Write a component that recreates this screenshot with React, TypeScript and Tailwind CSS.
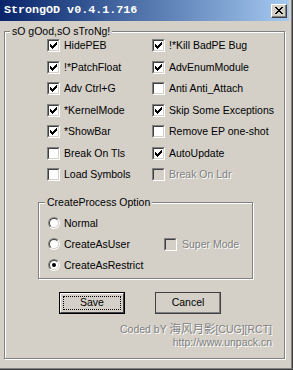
const CHECK = ['......X', '.....XX', 'X...XXX', 'XX.XXX.', 'XXXXX..', '.XXX...', '..X....'];
const CROSS = ['XX....XX', '.XX..XX.', '..XXXX..', '...XX...', '..XXXX..', '.XX..XX.', 'XX....XX'];

function Pixels({ rows, color = '#000' }: { rows: string[]; color?: string }) {
  return (
    <svg width={rows[0].length} height={rows.length} shapeRendering="crispEdges" className="block">
      {rows.map((r, y) =>
        r.split('').map((c, x) => (c === 'X' ? <rect key={`${x}-${y}`} x={x} y={y} width={1} height={1} fill={color} /> : null))
      )}
    </svg>
  );
}

function Box({ checked, disabled }: { checked?: boolean; disabled?: boolean }) {
  return (
    <span className="block w-[13px] h-[13px] shrink-0 border border-t-[#808080] border-l-[#808080] border-b-white border-r-white">
      <span
        className={`flex w-full h-full items-center justify-center border border-t-[#404040] border-l-[#404040] border-b-[#d4d0c8] border-r-[#d4d0c8] ${
          disabled ? 'bg-[#d4d0c8]' : 'bg-white'
        }`}
      >
        {checked && <Pixels rows={CHECK} />}
      </span>
    </span>
  );
}

function Radio({ checked }: { checked?: boolean }) {
  return (
    <span className="block w-[12px] h-[12px] shrink-0 rounded-full border border-t-[#808080] border-l-[#808080] border-b-white border-r-white">
      <span className="flex w-full h-full items-center justify-center rounded-full border border-t-[#404040] border-l-[#404040] border-b-[#d4d0c8] border-r-[#d4d0c8] bg-white">
        {checked && <span className="block w-[4px] h-[4px] rounded-full bg-black" />}
      </span>
    </span>
  );
}

const disabledText = 'text-[#808080] [text-shadow:1px_1px_0_#fff]';

function Check({ label, checked, disabled }: { label: string; checked?: boolean; disabled?: boolean }) {
  return (
    <div className="flex items-center gap-[4px] h-[21.5px]">
      <Box checked={checked} disabled={disabled} />
      <span className={`whitespace-nowrap ${disabled ? disabledText : ''}`}>{label}</span>
    </div>
  );
}

const left = [
  { label: 'HidePEB', checked: true },
  { label: '!*PatchFloat', checked: true },
  { label: 'Adv Ctrl+G', checked: true },
  { label: '*KernelMode', checked: true },
  { label: '*ShowBar', checked: true },
  { label: 'Break On Tls' },
  { label: 'Load Symbols' },
];

const right = [
  { label: '!*Kill BadPE Bug', checked: true },
  { label: 'AdvEnumModule', checked: true },
  { label: 'Anti Anti_Attach' },
  { label: 'Skip Some Exceptions', checked: true },
  { label: 'Remove EP one-shot' },
  { label: 'AutoUpdate', checked: true },
  { label: 'Break On Ldr', disabled: true },
];

const etched = 'relative border border-[#808080] shadow-[inset_1px_1px_0_#fff,1px_1px_0_#fff]';

export default function App() {
  return (
    <div
      className="w-[293px] h-[370px] bg-[#d4d0c8] border-r border-b border-[#404040] shadow-[inset_-1px_-1px_0_#808080] pr-[3px] text-black text-[10.5px] leading-[13px] overflow-hidden"
      style={{ fontFamily: '"Liberation Sans", Arial, sans-serif' }}
    >
      {/* Title bar */}
      <div className="h-[21px] flex items-center justify-between pl-[4px] pr-[2px] bg-gradient-to-r from-[#0a246a] to-[#a6caf0]">
        <span
          className="text-white font-bold text-[11.7px] leading-none whitespace-nowrap"
          style={{ fontFamily: '"Liberation Mono", "Courier New", monospace' }}
        >
          StrongOD v0.4.1.716
        </span>
        <div className="w-[16px] h-[14px] bg-[#d4d0c8] border border-t-white border-l-white border-b-[#404040] border-r-[#404040] shadow-[inset_-1px_-1px_0_#808080] flex items-center justify-center">
          <Pixels rows={CROSS} />
        </div>
      </div>

      {/* Body */}
      <div className="pl-[4px] pt-[10px]">
        <div className={`${etched} w-[281px] h-[328px]`}>
          <span className="absolute -top-[7px] left-[5px] bg-[#d4d0c8] px-[2px]">sO gOod,sO sTroNg!</span>

          <div className="flex pl-[42px] pt-[3px]">
            <div className="w-[105px] flex flex-col">
              {left.map((c) => (
                <Check key={c.label} {...c} />
              ))}
            </div>
            <div className="flex flex-col">
              {right.map((c) => (
                <Check key={c.label} {...c} />
              ))}
            </div>
          </div>

          <div className={`${etched} ml-[33px] mt-[16px] w-[215px] h-[77px]`}>
            <span className="absolute -top-[7px] left-[6px] bg-[#d4d0c8] px-[2px]">CreateProcess Option</span>
            <div className="pl-[9px] pt-[10px] flex flex-col">
              <div className="flex items-center gap-[4px] h-[21px]">
                <Radio />
                <span>Normal</span>
              </div>
              <div className="flex items-center h-[21px]">
                <div className="w-[116px] flex items-center gap-[4px]">
                  <Radio />
                  <span>CreateAsUser</span>
                </div>
                <div className="flex items-center gap-[5px]">
                  <Box disabled />
                  <span className={disabledText}>Super Mode</span>
                </div>
              </div>
              <div className="flex items-center gap-[4px] h-[21px]">
                <Radio checked />
                <span>CreateAsRestrict</span>
              </div>
            </div>
          </div>

          <div className="flex ml-[54px] mt-[13px] gap-[30px]">
            <button className="w-[66px] h-[22px] border border-black p-0 bg-[#d4d0c8]">
              <span className="flex w-full h-full border border-t-white border-l-white border-b-[#404040] border-r-[#404040] p-[2px]">
                <span className="flex-1 flex items-center justify-center border border-dotted border-black">Save</span>
              </span>
            </button>
            <button className="w-[66px] h-[22px] border border-t-white border-l-white border-b-[#404040] border-r-[#404040] shadow-[inset_-1px_-1px_0_#808080,0_0_0_0_#000] outline outline-1 outline-[#404040] -outline-offset-1 bg-[#d4d0c8] flex items-center justify-center">
              Cancel
            </button>
          </div>

          <div className={`mt-[8px] pr-[12px] flex flex-col items-end ${disabledText}`}>
            <span className="whitespace-nowrap">
              Coded bY{' '}
              <span
                className="text-[11.5px]"
                style={{ fontFamily: '"Noto Sans CJK SC", sans-serif' }}
              >
                海风月影
              </span>
              [CUG][RCT]
            </span>
            <span>http://www.unpack.cn</span>
          </div>
        </div>
      </div>
    </div>
  );
}
